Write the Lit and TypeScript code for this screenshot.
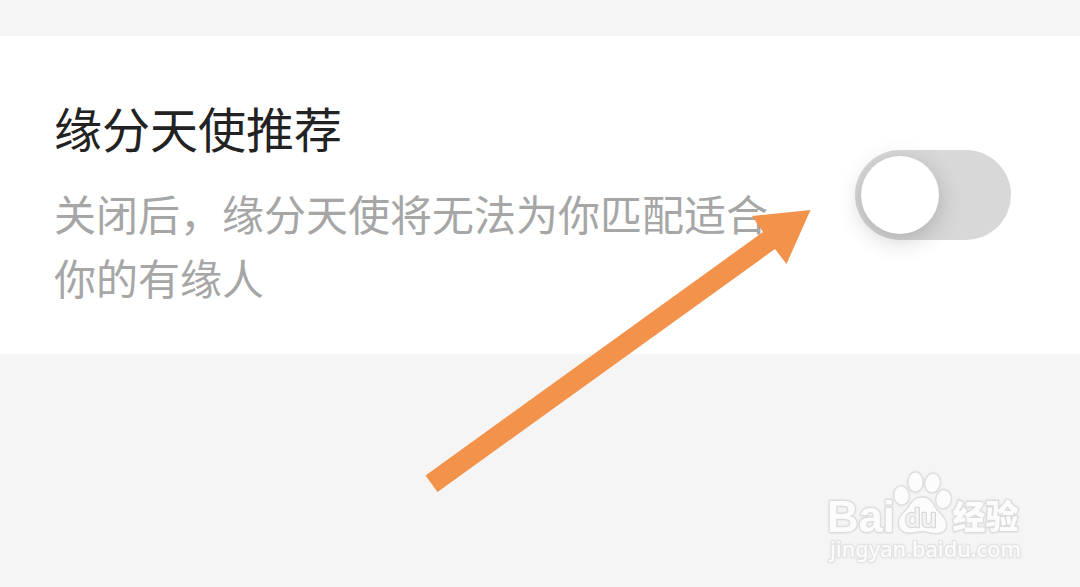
import { LitElement, html, css } from 'lit';

class ToggleSwitch extends LitElement {
    checked:boolean
    static properties = {
        checked: {type:Boolean, reflect:true},
    };
    static styles = css`
    :host {
        display: block;
        flex: none;
    }
    button {
        display: flex;
        align-items: center;
        box-sizing: border-box;
        width: 156px;
        height: 90px;
        padding: 0 6px;
        border: none;
        border-radius: 45px;
        background-color: #d8d8d8;
    }
    .knob {
        width: 78px;
        height: 78px;
        border-radius: 50%;
        background-color: #fff;
        box-shadow: 0 6px 24px rgba(0, 0, 0, 0.2);
    }
    :host([checked]) button {
        justify-content: flex-end;
        background-color: #f3924b;
    }
    `;
    constructor() {
        super();
        this.checked = false;
    }
    toggle() {
        this.checked = !this.checked;
    }
    render() {
        return html`
        <button role="switch" aria-checked=${this.checked} @click=${this.toggle}>
            <span class="knob"></span>
        </button>
        `;
    }
}

class SiteWatermark extends LitElement {
    static styles = css`
    :host {
        display: block;
    }
    svg {
        display: block;
        filter: drop-shadow(0 0 1px rgba(0, 0, 0, 0.08));
    }
    .mark {
        fill: #fcfcfc;
        stroke: #dcdcdc;
        stroke-width: 2.4px;
        stroke-linejoin: round;
        paint-order: stroke;
    }
    .latin {
        font: bold 44px "Liberation Sans", sans-serif;
    }
    .du {
        font: 600 25px "Open Sans", "Noto Sans", sans-serif;
        fill: #f4f4f4;
        stroke: #d8d8d8;
        stroke-width: 2.4px;
    }
    .cjk {
        font: 900 33px "Noto Sans CJK SC", sans-serif;
    }
    .url {
        font: 500 21px "Noto Sans", sans-serif;
        stroke: #e2e2e2;
        stroke-width: 2px;
    }
    `;
    render() {
        return html`
        <svg width="210" height="110" viewBox="820 465 210 110">
            <text class="mark latin" x="827" y="531.5" textLength="68" lengthAdjust="spacingAndGlyphs">Bai</text>
            <g class="mark">
                <ellipse cx="901.5" cy="495.5" rx="7.2" ry="9" transform="rotate(-8 901.5 495.5)"/>
                <ellipse cx="915.5" cy="482" rx="7" ry="9.5"/>
                <ellipse cx="932.5" cy="483" rx="7.2" ry="9.3" transform="rotate(10 932.5 483)"/>
                <ellipse cx="943.5" cy="499.3" rx="7.2" ry="9" transform="rotate(8 943.5 499.3)"/>
                <path d="M922 497.5C929 497.5 932 502 935 508C939 514 946 518 946 525C946 531 941 533 936 533C931 533 927 531 922 531C917 531 914 532.5 909 532.5C903 532.5 899 529 899 522.5C899 516 905 513 909 507C913 501 916 497.5 922 497.5Z"/>
            </g>
            <text class="mark du" x="905" y="526.5" textLength="32" lengthAdjust="spacingAndGlyphs">du</text>
            <text class="mark cjk" x="952.5" y="529" textLength="66" lengthAdjust="spacingAndGlyphs">经验</text>
            <text class="mark url" x="830" y="557" textLength="191" lengthAdjust="spacingAndGlyphs">jingyan.baidu.com</text>
        </svg>
        `;
    }
}

class AppRoot extends LitElement {
    static styles = css`
    :host {
        display: block;
        position: relative;
        box-sizing: border-box;
        height: 587px;
        padding-top: 36px;
        overflow: hidden;
        background-color: #f5f5f5;
        font-family: "Noto Sans CJK SC", sans-serif;
    }
    .setting {
        display: flex;
        align-items: center;
        justify-content: space-between;
        box-sizing: border-box;
        height: 318px;
        padding: 0 69px 0 54px;
        background-color: #fff;
    }
    .text {
        padding-top: 10px;
    }
    .title {
        font-size: 48px;
        line-height: 72px;
        color: #222;
    }
    .desc {
        width: 720px;
        margin-top: 18px;
        font-size: 42px;
        line-height: 64px;
        color: #a6a6a6;
    }
    .arrow {
        position: absolute;
        left: 0;
        top: 0;
        pointer-events: none;
    }
    .watermark {
        position: absolute;
        left: 820px;
        top: 465px;
    }
    `;
    render() {
        return html`
        <div class="setting">
            <div class="text">
                <div class="title">缘分天使推荐</div>
                <div class="desc">关闭后，缘分天使将无法为你匹配适合你的有缘人</div>
            </div>
            <toggle-switch></toggle-switch>
        </div>
        <svg class="arrow" width="1080" height="587">
            <polygon fill="#f3924b" points="810.5,210 752,216 763,232 425.5,475.5 437.5,492 775,249 786.5,264"/>
        </svg>
        <site-watermark class="watermark"></site-watermark>
        `;
    }
}

customElements.define('toggle-switch', ToggleSwitch);
customElements.define('site-watermark', SiteWatermark);
customElements.define('app-root', AppRoot);
